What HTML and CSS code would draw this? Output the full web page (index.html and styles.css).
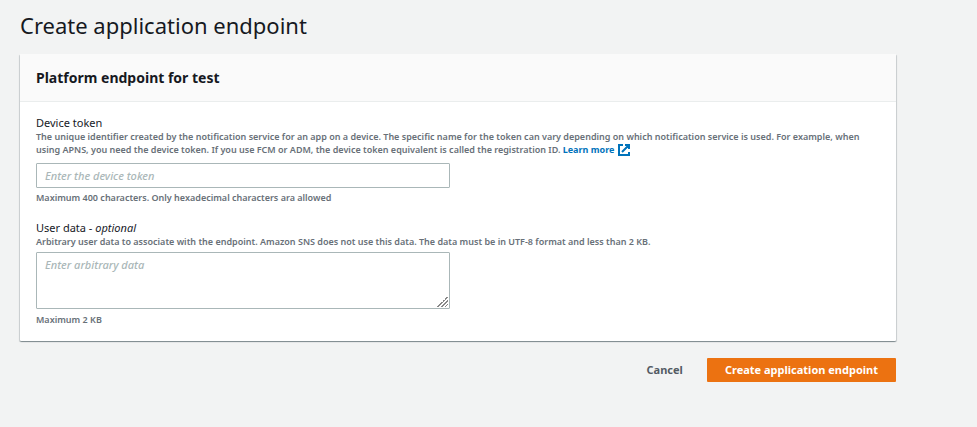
FILE: index.html
```html
<!DOCTYPE html>
<html lang="en">
<head>
  <meta charset="UTF-8" />
  <meta name="viewport" content="width=device-width, initial-scale=1.0" />
  <title>Create application endpoint</title>
  <link rel="stylesheet" href="styles.css">
</head>
<body>
  <main class="page">
    <h1 class="page-title">Create application endpoint</h1>

    <form>
      <section class="card">
        <h2 class="card-header">Platform endpoint for test</h2>

        <div class="card-body">
          <div class="field">
            <label class="label" for="deviceToken">Device token</label>
            <p class="description">
              The unique identifier created by the notification service for an app on a device. The specific name for the token can vary depending on which notification service is used. For example, when using APNS, you need the device token. If you use FCM or ADM, the device token equivalent is called the registration ID.
              <a class="link" href="#">Learn more<svg class="external-icon" viewBox="0 0 12 12" aria-hidden="true"><path d="M5 1H1v10h10V8M7 1h4v4M11 1L4 8" /></svg></a>
            </p>
            <input class="control" type="text" id="deviceToken" placeholder="Enter the device token">
            <p class="hint">Maximum 400 characters. Only hexadecimal characters ara allowed</p>
          </div>

          <div class="field">
            <label class="label" for="userData">User data - <i>optional</i></label>
            <p class="description">Arbitrary user data to associate with the endpoint. Amazon SNS does not use this data. The data must be in UTF-8 format and less than 2 KB.</p>
            <textarea class="control control-area" id="userData" placeholder="Enter arbitrary data"></textarea>
            <p class="hint">Maximum 2 KB</p>
          </div>
        </div>
      </section>

      <div class="actions">
        <button class="btn btn-link" type="button">Cancel</button>
        <button class="btn btn-primary" type="submit">Create application endpoint</button>
      </div>
    </form>
  </main>
</body>
</html>
```

FILE: styles.css
```css
body {
  margin: 0;
  background: #f2f3f3;
  color: #16191f;
  font-family: "Noto Sans", sans-serif;
  font-size: 11px;
}

.page {
  padding: 9px 81px 40px 20px;
}

.page-title {
  margin: 0 0 13px;
  font-size: 22px;
  font-weight: 400;
  line-height: 32px;
}

.card {
  background: #fff;
  border-radius: 1px;
  box-shadow: 0 1px 1px 0 rgba(0, 28, 36, 0.3), 1px 1px 1px 0 rgba(0, 28, 36, 0.15), -1px 1px 1px 0 rgba(0, 28, 36, 0.15);
}

.card-header {
  margin: 0;
  padding: 12px 16px;
  background: #fafafa;
  border-bottom: 1px solid #eaeded;
  font-size: 14px;
  font-weight: 700;
  line-height: 23px;
}

.card-body {
  display: flex;
  flex-direction: column;
  gap: 16px;
  padding: 13px 16px 15px;
}

.field {
  display: flex;
  flex-direction: column;
  align-items: flex-start;
}

.label {
  font-size: 11px;
  line-height: 15px;
}

.description,
.hint {
  margin: 0;
  color: #687078;
  font-size: 9px;
  font-weight: 600;
  line-height: 13px;
}

.link {
  color: #0073bb;
  font-weight: 700;
  text-decoration: none;
  white-space: nowrap;
}

.link:hover {
  text-decoration: underline;
}

.external-icon {
  width: 12px;
  height: 12px;
  margin-left: 4px;
  vertical-align: -3px;
  fill: none;
  stroke: currentColor;
  stroke-width: 2;
}

.control {
  box-sizing: border-box;
  width: 49%;
  height: 25px;
  margin: 7px 0 3px;
  padding: 3px 8px;
  background: #fff;
  border: 1px solid #aab7b8;
  border-radius: 1px;
  color: #16191f;
  font-family: inherit;
  font-size: 11px;
  line-height: 17px;
}

.control::placeholder {
  color: #aab7b8;
  font-style: italic;
  font-weight: 500;
}

.control-area {
  height: 57px;
  margin: 4px 0;
  resize: both;
}

.control-area::-webkit-resizer {
  background: linear-gradient(135deg, transparent 50%, #888 50% 57%, transparent 57% 66%, #888 66% 73%, transparent 73% 82%, #888 82% 89%, transparent 89%) 3px 3px / 11px 11px no-repeat;
}

.actions {
  display: flex;
  justify-content: flex-end;
  gap: 6px;
  margin-top: 17px;
}

.btn {
  height: 24px;
  padding: 0 18px;
  border: 0;
  border-radius: 1px;
  font-family: inherit;
  font-size: 11px;
  font-weight: 700;
  line-height: 24px;
  cursor: pointer;
}

.btn-link {
  background: transparent;
  color: #545b64;
}

.btn-primary {
  background: #ec7211;
  color: #fff;
}

.btn-primary:hover {
  background: #eb5f07;
}
```
